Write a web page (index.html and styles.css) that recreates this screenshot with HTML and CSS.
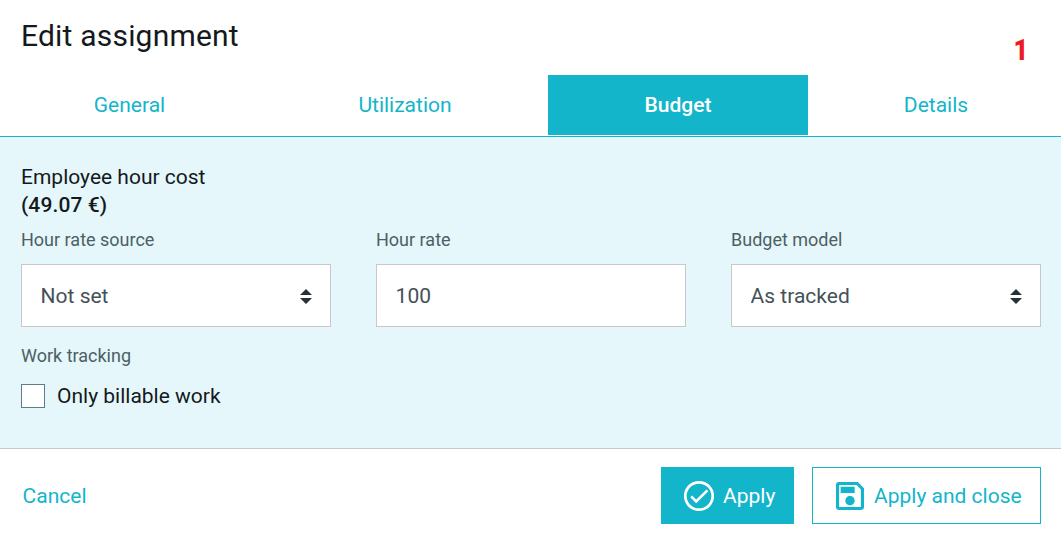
FILE: index.html
```html
<!DOCTYPE html>
<html lang="en">
<head>
    <meta charset="UTF-8">
    <meta name="viewport" content="width=device-width, initial-scale=1.0">
    <title>Edit assignment</title>
    <link rel="stylesheet" href="styles.css">
</head>
<body>
    <form class="dialog">
        <header class="dialog-header">
            <h1>Edit assignment</h1>
            <span class="step">1</span>
        </header>

        <nav class="tabs">
            <a class="tab">General</a>
            <a class="tab">Utilization</a>
            <a class="tab active">Budget</a>
            <a class="tab">Details</a>
        </nav>

        <section class="panel">
            <p class="cost">Employee hour cost<br><strong>(49.07 €)</strong></p>

            <div class="fields">
                <div class="field">
                    <label for="rateSource">Hour rate source</label>
                    <div class="select">
                        <select id="rateSource">
                            <option>Not set</option>
                        </select>
                        <svg class="arrows" viewBox="0 0 12 15"><path d="M0 6L6 0l6 6zM0 9h12l-6 6z"/></svg>
                    </div>
                </div>
                <div class="field">
                    <label for="hourRate">Hour rate</label>
                    <input type="text" id="hourRate" value="100">
                </div>
                <div class="field">
                    <label for="budgetModel">Budget model</label>
                    <div class="select">
                        <select id="budgetModel">
                            <option>As tracked</option>
                        </select>
                        <svg class="arrows" viewBox="0 0 12 15"><path d="M0 6L6 0l6 6zM0 9h12l-6 6z"/></svg>
                    </div>
                </div>
            </div>

            <div class="group-label">Work tracking</div>
            <label class="check">
                <input type="checkbox">
                <span>Only billable work</span>
            </label>
        </section>

        <footer class="dialog-footer">
            <a class="cancel">Cancel</a>
            <button type="button" class="btn btn-primary">
                <svg class="icon-check" viewBox="0 0 30 30">
                    <circle cx="15" cy="15" r="13.7"/>
                    <path d="M7.2 15.4l5 5L23.4 9.4"/>
                </svg>
                <span>Apply</span>
            </button>
            <button type="button" class="btn btn-outline">
                <svg class="icon-save" viewBox="3 3 18 18">
                    <path d="M17 3H5a2 2 0 0 0-2 2v14a2 2 0 0 0 2 2h14a2 2 0 0 0 2-2V7l-4-4zm2 16H5V5h11.17L19 7.83V19zm-7-7c-1.66 0-3 1.34-3 3s1.34 3 3 3 3-1.34 3-3-1.34-3-3-3zM6 6h9v4H6z"/>
                </svg>
                <span>Apply and close</span>
            </button>
        </footer>
    </form>
</body>
</html>
```
FILE: styles.css
```css
* {
    box-sizing: border-box;
}
body {
    margin: 0;
    font-family: Roboto, sans-serif;
    font-size: 21px;
    color: #14191c;
    background: white;
    overflow: hidden;
}
.dialog {
    display: flex;
    flex-direction: column;
    height: 100vh;
}
.dialog-header {
    display: flex;
    justify-content: space-between;
    height: 75px;
    padding: 0 33px 0 21px;
}
h1 {
    margin: 18px 0 0;
    font-size: 30px;
    line-height: 36px;
    font-weight: 400;
    letter-spacing: 0.2px;
}
.step {
    margin-top: 34px;
    font-size: 30px;
    line-height: 32px;
    font-weight: 900;
    color: #ed1c24;
    transform: scaleX(0.85);
    transform-origin: right;
}
.tabs {
    display: grid;
    grid-template-columns: 265fr 286fr 260fr 256fr;
    height: 62px;
    margin: 0 -3px;
    padding-bottom: 1px;
    border-bottom: 1px solid #13b5cb;
}
.tab {
    line-height: 60px;
    text-align: center;
    color: #13b5cb;
}
.tab.active {
    background: #13b5cb;
    color: white;
    font-weight: 500;
}
.panel {
    height: 312px;
    padding: 26px 20px 0 21px;
    background: #e5f7fa;
    border-bottom: 1px solid #c8c8c8;
}
.cost {
    margin: 0;
    line-height: 28px;
}
.cost strong {
    font-weight: 500;
    letter-spacing: 0.1px;
}
.fields {
    display: grid;
    grid-template-columns: repeat(3, 1fr);
    column-gap: 45px;
    margin-top: 9px;
}
.field label, .group-label {
    display: block;
    font-size: 18px;
    line-height: 24px;
    color: #4c5f66;
}
.field label {
    margin-bottom: 12px;
}
.field input, .field select {
    display: block;
    width: 100%;
    height: 63px;
    padding: 0 18.6px;
    font: inherit;
    color: #455158;
    background: white;
    border: 1px solid #c8c8c8;
    border-radius: 0;
    appearance: none;
}
.select {
    position: relative;
}
.arrows {
    position: absolute;
    top: 25px;
    right: 19px;
    width: 12px;
    height: 15px;
    fill: #263238;
    pointer-events: none;
}
.group-label {
    margin-top: 17px;
}
.check {
    display: flex;
    align-items: center;
    gap: 12px;
    margin-top: 16px;
    line-height: 24px;
}
.check input {
    width: 24px;
    height: 24px;
    margin: 0;
    background: white;
    border: 1px solid #607d8b;
    appearance: none;
}
.dialog-footer {
    display: flex;
    align-items: center;
    flex: 1;
    padding: 4px 20px 0 22.6px;
}
.cancel {
    margin-right: auto;
    color: #13b5cb;
}
.btn {
    display: flex;
    align-items: center;
    height: 57px;
    padding: 0 18px 0 22px;
    font: inherit;
    white-space: nowrap;
    border: 1px solid #13b5cb;
}
.btn-primary {
    width: 133px;
    color: white;
    background: #13b5cb;
}
.btn-outline {
    width: 229px;
    margin-left: 18px;
    color: #13b5cb;
    background: white;
}
.icon-check {
    flex: none;
    width: 30px;
    height: 30px;
    margin-right: 9px;
    fill: none;
    stroke: white;
    stroke-width: 2.7;
}
.icon-save {
    flex: none;
    width: 28px;
    height: 28px;
    margin: 0 10px 0 1px;
    fill: #13b5cb;
}
```
